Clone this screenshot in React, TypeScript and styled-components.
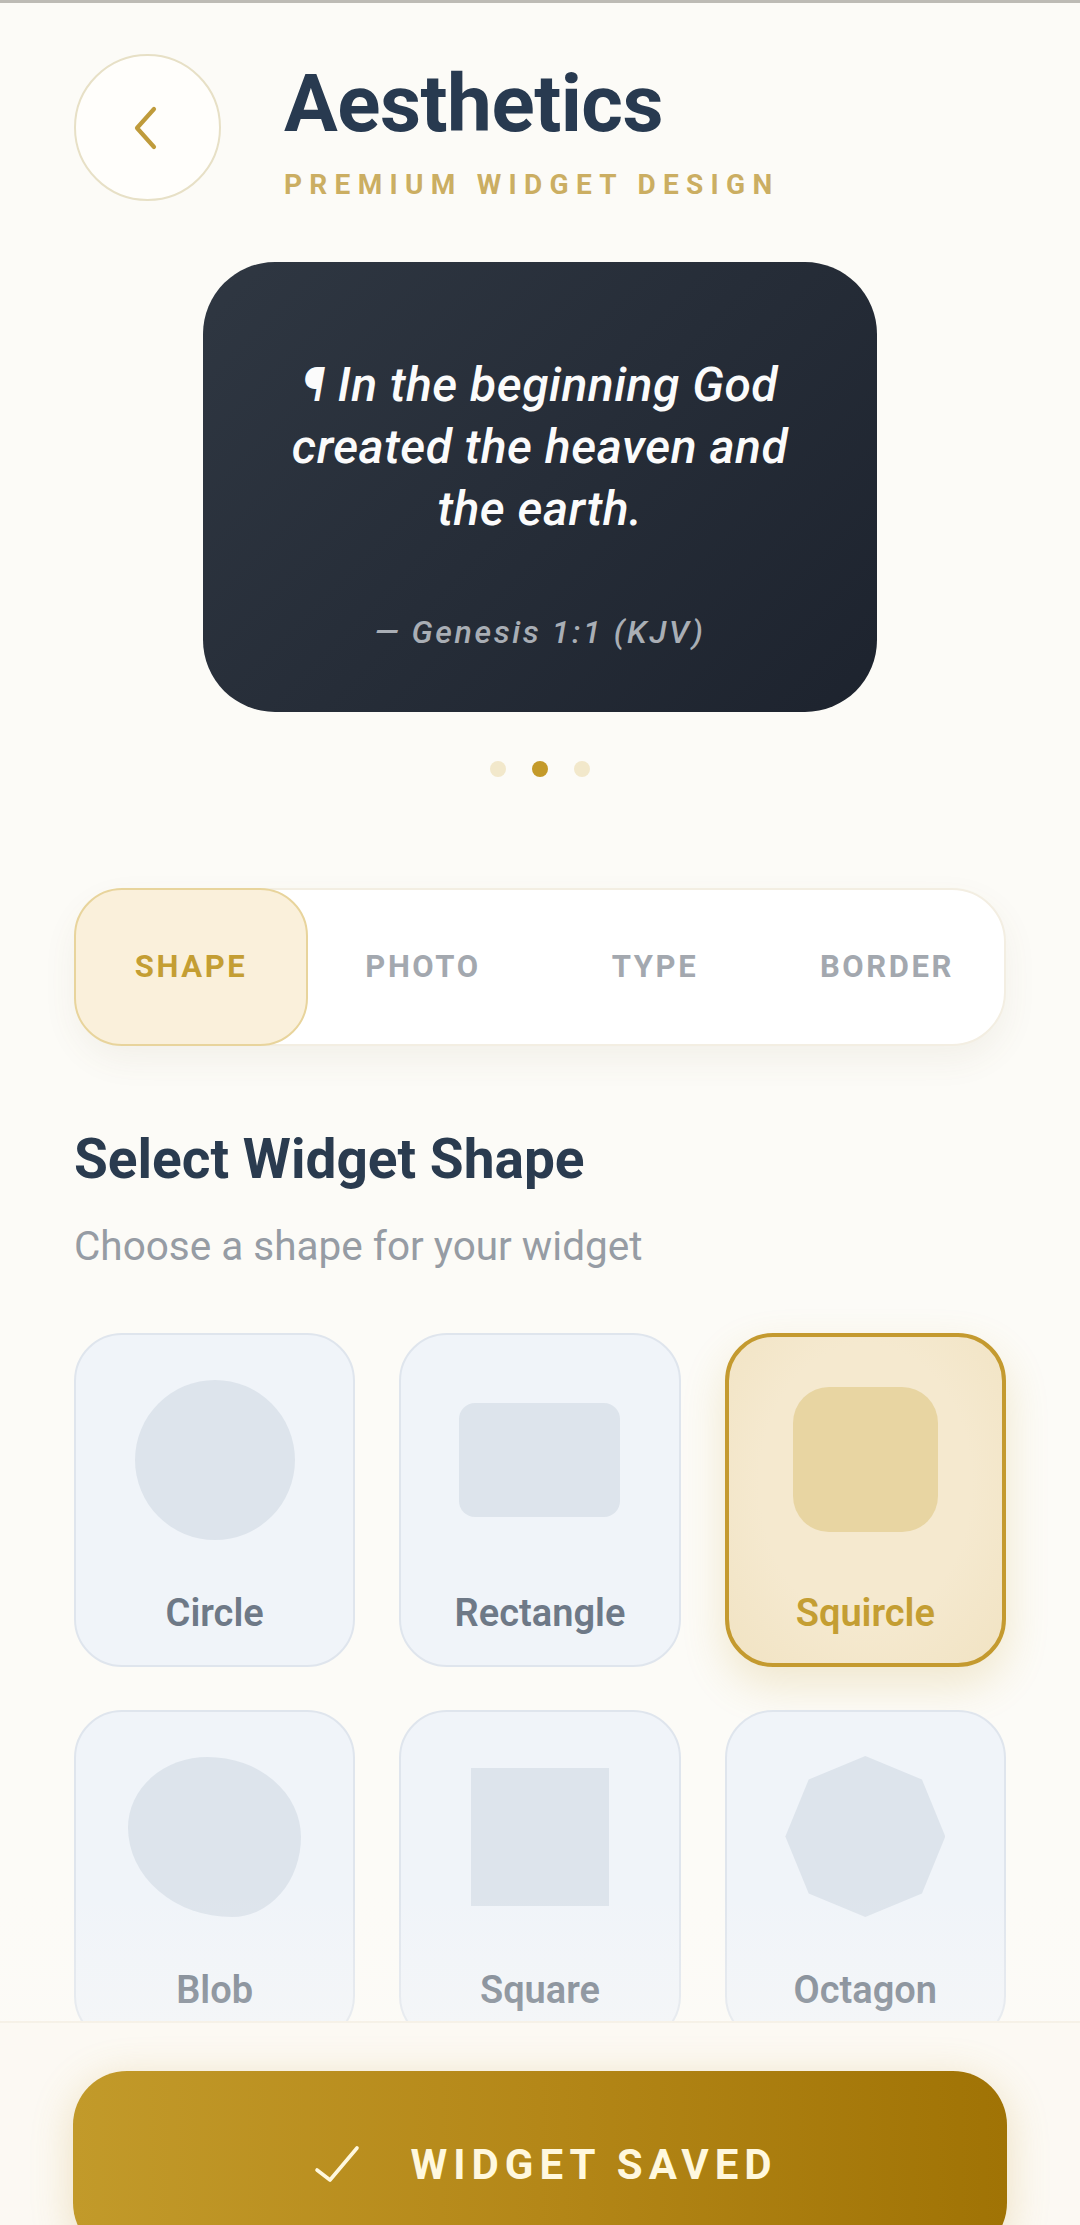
import React from "react";
import styled, { createGlobalStyle, css } from "styled-components";

const GlobalStyle = createGlobalStyle`
  html, body {
    margin: 0;
    padding: 0;
    background: #fcfbf7;
    font-family: Roboto, "Noto Sans", "Liberation Sans", sans-serif;
  }
  * { box-sizing: border-box; }
`;

const Page = styled.div`
  height: 100vh;
  display: flex;
  flex-direction: column;
  overflow: hidden;
  background: #fcfbf7;
`;

const StatusLine = styled.div`
  height: 3px;
  flex-shrink: 0;
  background: #bdbbb5;
`;

const Scroll = styled.main`
  flex: 1;
  min-height: 0;
  overflow: hidden;
  padding: 0 74px;
  display: flex;
  flex-direction: column;

  & > * {
    flex-shrink: 0;
  }
`;

const Header = styled.header`
  display: flex;
  align-items: flex-start;
  gap: 63px;
  padding-top: 51px;
`;

const BackButton = styled.button`
  width: 147px;
  height: 147px;
  flex-shrink: 0;
  border-radius: 50%;
  border: 2px solid #e7e0c6;
  background: #fffefb;
  display: flex;
  align-items: center;
  justify-content: center;
  padding: 0 4px 0 0;
  cursor: pointer;
`;

const TitleBlock = styled.div`
  display: flex;
  flex-direction: column;
  padding-top: 10px;
`;

const Title = styled.h1`
  margin: 0;
  font-size: 80px;
  line-height: 1;
  font-weight: 700;
  color: #283a50;
  letter-spacing: -0.5px;
`;

const Subtitle = styled.div`
  margin-top: 27px;
  font-size: 28px;
  line-height: 1;
  font-weight: 700;
  letter-spacing: 7.3px;
  color: #cbae62;
`;

const PreviewCard = styled.section`
  margin: 61px auto 0;
  width: 674px;
  height: 450px;
  border-radius: 72px;
  background: linear-gradient(135deg, #2f3742 0%, #1d232e 100%);
  padding: 92px 30px 0;
  display: flex;
  flex-direction: column;
  align-items: center;
  text-align: center;
`;

const Quote = styled.p`
  margin: 0;
  font-size: 48px;
  line-height: 62px;
  font-style: italic;
  font-weight: 500;
  color: #fbfbfb;
  letter-spacing: 0.5px;
`;

const Reference = styled.div`
  margin-top: 74px;
  font-size: 32px;
  line-height: 36px;
  font-style: italic;
  font-weight: 500;
  letter-spacing: 2.6px;
  color: #a9aeb5;
`;

const Dots = styled.div`
  margin-top: 49px;
  display: flex;
  justify-content: center;
  gap: 26px;
`;

const Dot = styled.span<{ $active?: boolean }>`
  width: 16px;
  height: 16px;
  border-radius: 50%;
  background: ${(p) => (p.$active ? "#c49a2a" : "#f2e8cb")};
`;

const Tabs = styled.nav`
  margin-top: 111px;
  height: 158px;
  display: grid;
  grid-template-columns: repeat(4, 1fr);
  background: #ffffff;
  border: 2px solid #f3eee2;
  border-radius: 54px;
  box-shadow: 0 14px 34px rgba(120, 100, 50, 0.07);
`;

const Tab = styled.button<{ $active?: boolean }>`
  margin: -2px 0 -2px -2px;
  border-radius: 48px;
  border: 2px solid ${(p) => (p.$active ? "#e8d49c" : "transparent")};
  background: ${(p) => (p.$active ? "#faf0db" : "transparent")};
  color: ${(p) => (p.$active ? "#c49e33" : "#a3a8af")};
  font-family: inherit;
  font-size: 31px;
  font-weight: 700;
  letter-spacing: 2.6px;
  display: flex;
  align-items: center;
  justify-content: center;
  padding: 0 0 2px;
  cursor: pointer;
`;

const SectionTitle = styled.h2`
  margin: 80px 0 0;
  font-size: 55px;
  line-height: 1.2;
  font-weight: 700;
  color: #2a3b4f;
`;

const SectionSub = styled.p`
  margin: 30px 0 0;
  font-size: 40.5px;
  line-height: 1.2;
  font-weight: 400;
  color: #969ca4;
`;

const Grid = styled.div`
  margin-top: 62px;
  display: grid;
  grid-template-columns: repeat(3, 1fr);
  column-gap: 44px;
  row-gap: 43px;
`;

const ShapeCard = styled.button<{ $selected?: boolean }>`
  height: 334px;
  border-radius: 48px;
  font-family: inherit;
  display: flex;
  flex-direction: column;
  align-items: center;
  cursor: pointer;
  ${(p) =>
    p.$selected
      ? css`
          padding: 43px 0 0;
          border: 4px solid #c49a2f;
          background: radial-gradient(ellipse at 50% 45%, #f5e9cf 55%, #f1e3c3 100%);
          box-shadow: 0 18px 44px rgba(196, 154, 42, 0.2);
        `
      : css`
          padding: 45px 0 0;
          border: 2px solid #dfe5ed;
          background: #f0f4f9;
        `}
`;

const ShapeSlot = styled.div`
  width: 180px;
  height: 160px;
  display: flex;
  align-items: center;
  justify-content: center;
`;

type ShapeKind = "circle" | "rectangle" | "squircle" | "blob" | "square" | "octagon";

const shapeStyles: Record<ShapeKind, ReturnType<typeof css>> = {
  circle: css`
    width: 160px;
    height: 160px;
    border-radius: 50%;
  `,
  rectangle: css`
    width: 161px;
    height: 114px;
    border-radius: 16px;
  `,
  squircle: css`
    width: 145px;
    height: 145px;
    border-radius: 36px;
  `,
  blob: css`
    width: 173px;
    height: 160px;
    border-radius: 46% 54% 40% 60% / 44% 50% 50% 56%;
  `,
  square: css`
    width: 138px;
    height: 138px;
    border-radius: 0;
  `,
  octagon: css`
    width: 160px;
    height: 161px;
    clip-path: polygon(50% 0, 85.4% 14.6%, 100% 50%, 85.4% 85.4%, 50% 100%, 14.6% 85.4%, 0 50%, 14.6% 14.6%);
  `,
};

const Shape = styled.div<{ $kind: ShapeKind; $selected?: boolean }>`
  background: ${(p) => (p.$selected ? "#e8d5a2" : "#dde4ec")};
  ${(p) => shapeStyles[p.$kind]}
`;

const ShapeLabel = styled.span<{ $selected?: boolean }>`
  margin-top: 51px;
  font-size: 38px;
  line-height: 1.2;
  font-weight: 600;
  color: ${(p) => (p.$selected ? "#c49e33" : "#6e7987")};
`;

const BottomBar = styled.footer`
  position: relative;
  flex-shrink: 0;
  height: 204px;
  padding: 48px 73px 0;
  background: #fcf9f3;
  border-top: 2px solid #f3ede1;

  &::before {
    content: "";
    position: absolute;
    left: 0;
    right: 0;
    bottom: 100%;
    height: 130px;
    background: linear-gradient(to bottom, rgba(252, 250, 245, 0), rgba(252, 250, 245, 0.32));
    pointer-events: none;
  }
`;

const SaveButton = styled.button`
  width: 100%;
  height: 186px;
  border: none;
  border-radius: 54px;
  background: linear-gradient(90deg, #c29a2a 0%, #b48718 50%, #a07305 100%);
  box-shadow: 0 8px 40px rgba(200, 160, 60, 0.28);
  color: #fff8de;
  font-family: inherit;
  font-size: 42px;
  font-weight: 700;
  letter-spacing: 6px;
  display: flex;
  align-items: center;
  justify-content: center;
  gap: 50px;
  padding: 0 0 0 12px;
  cursor: pointer;
`;

const shapes: { kind: ShapeKind; label: string }[] = [
  { kind: "circle", label: "Circle" },
  { kind: "rectangle", label: "Rectangle" },
  { kind: "squircle", label: "Squircle" },
  { kind: "blob", label: "Blob" },
  { kind: "square", label: "Square" },
  { kind: "octagon", label: "Octagon" },
];

const tabs = ["SHAPE", "PHOTO", "TYPE", "BORDER"];

export default function App() {
  const selected: ShapeKind = "squircle";
  return (
    <>
      <GlobalStyle />
      <Page>
        <StatusLine />
        <Scroll>
          <Header>
            <BackButton aria-label="Back">
              <svg width="26" height="44" viewBox="0 0 26 44" fill="none">
                <path
                  d="M21 3 L4 22 L21 41"
                  stroke="#bf9b3b"
                  strokeWidth="4.2"
                  strokeLinecap="round"
                  strokeLinejoin="round"
                />
              </svg>
            </BackButton>
            <TitleBlock>
              <Title>Aesthetics</Title>
              <Subtitle>PREMIUM WIDGET DESIGN</Subtitle>
            </TitleBlock>
          </Header>

          <PreviewCard>
            <Quote>
              ¶ In the beginning God
              <br />
              created the heaven and
              <br />
              the earth.
            </Quote>
            <Reference>— Genesis 1:1 (KJV)</Reference>
          </PreviewCard>

          <Dots>
            <Dot />
            <Dot $active />
            <Dot />
          </Dots>

          <Tabs>
            {tabs.map((t, i) => (
              <Tab key={t} $active={i === 0}>
                {t}
              </Tab>
            ))}
          </Tabs>

          <SectionTitle>Select Widget Shape</SectionTitle>
          <SectionSub>Choose a shape for your widget</SectionSub>

          <Grid>
            {shapes.map((s) => {
              const isSel = s.kind === selected;
              return (
                <ShapeCard key={s.kind} $selected={isSel}>
                  <ShapeSlot>
                    <Shape $kind={s.kind} $selected={isSel} />
                  </ShapeSlot>
                  <ShapeLabel $selected={isSel}>{s.label}</ShapeLabel>
                </ShapeCard>
              );
            })}
          </Grid>
        </Scroll>

        <BottomBar>
          <SaveButton>
            <svg width="46" height="38" viewBox="0 0 46 38" fill="none">
              <path
                d="M3 25 L16 35 L43 3"
                stroke="#fff8de"
                strokeWidth="3.6"
                strokeLinecap="round"
                strokeLinejoin="round"
              />
            </svg>
            <span>WIDGET SAVED</span>
          </SaveButton>
        </BottomBar>
      </Page>
    </>
  );
}
